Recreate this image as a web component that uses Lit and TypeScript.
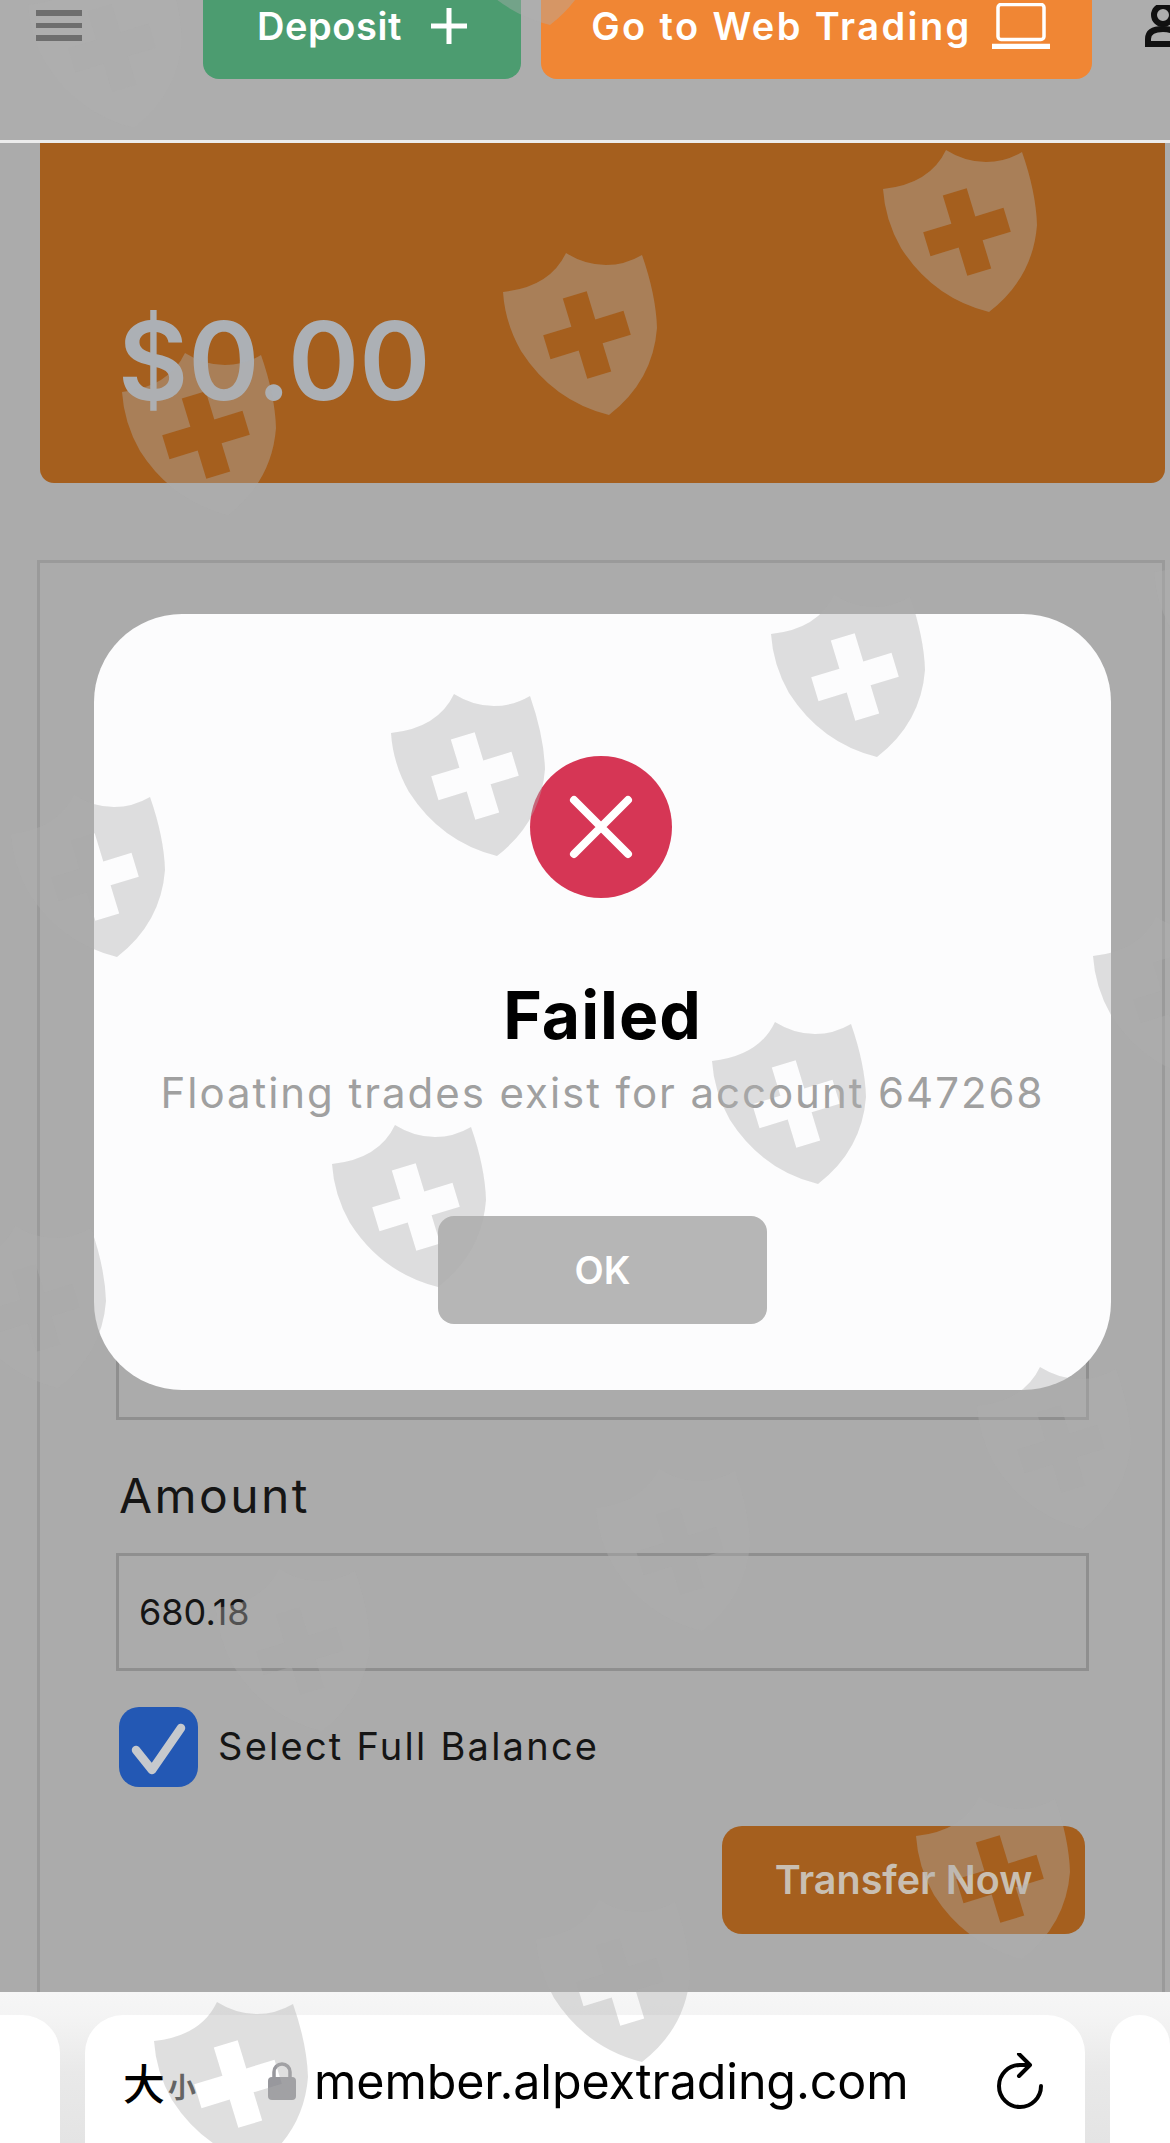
import { css, html, svg, LitElement } from "lit";
import { customElement } from "lit/decorators.js";

// watermark shields, top-left corner of each in page pixels
const SHIELDS: [number, number][] = [
  [28, -34], [444, -137],
  [883, 150], [503, 253], [122, 353],
  [771, 595], [391, 694], [11, 795], [1154, 533],
  [1093, 917], [712, 1022], [332, 1125], [-48, 1226],
  [977, 1367], [596, 1469], [216, 1569],
  [916, 1797], [536, 1900], [154, 2002],
];

const SHIELD_PATH =
  "M63 0Q82 12 103 12Q122 12 139 2Q153 42 154 75Q150 128 106 162Q50 148 18 98Q2 70 0 39Q47 34 63 0Z" +
  "M59.8 45.5L83.7 38.2L92.3 66.4L120.5 57.8L127.8 81.7L99.6 90.3L108.2 118.5L84.3 125.8L75.7 97.6L47.5 106.2L40.2 82.3L68.4 73.7Z";

@customElement("app-root")
export class AppRoot extends LitElement {
  static override styles = css`
    :host {
      display: block;
      font-family: Inter, "Noto Sans CJK SC", sans-serif;
    }

    .page {
      position: relative;
      width: 1170px;
      height: 2143px;
      overflow: hidden;
      display: flex;
      flex-direction: column;
      background: #ababab;
    }

    /* top bar */
    .topbar {
      flex: none;
      height: 143px;
      box-sizing: border-box;
      border-bottom: 3px solid #ececec;
      background: #adadad;
      display: flex;
      align-items: flex-start;
    }
    .burger {
      flex: none;
      margin: 10px 0 0 36px;
      width: 46px;
      display: flex;
      flex-direction: column;
      gap: 7px;
    }
    .burger span {
      display: block;
      height: 5.5px;
      background: #444;
    }
    .action {
      flex: none;
      height: 79px;
      box-sizing: border-box;
      padding-bottom: 28px;
      border-radius: 0 0 16px 16px;
      display: flex;
      align-items: center;
      justify-content: center;
      color: #fff;
      font-size: 38px;
      font-weight: 600;
    }
    .deposit {
      width: 318px;
      margin-left: 121px;
      gap: 29px;
      background: #4c9c70;
      letter-spacing: 0.6px;
    }
    .web {
      width: 551px;
      margin-left: 20px;
      padding-left: 8px;
      gap: 20px;
      background: #f08634;
      letter-spacing: 2.4px;
    }
    .user {
      margin: 5px 0 0 53px;
      flex: none;
    }

    /* balance card */
    .balance {
      flex: none;
      width: 1125px;
      height: 340px;
      box-sizing: border-box;
      margin-left: 40px;
      padding: 156px 0 0 78px;
      background: #a55f1e;
      border-radius: 0 0 14px 14px;
      color: #acb0b5;
      font-size: 108px;
      font-weight: 600;
      line-height: 124px;
    }

    /* transfer form */
    .panel {
      flex: 1;
      width: 1128px;
      box-sizing: border-box;
      margin: 77px 0 0 37px;
      padding: 737px 73px 0 76px;
      border: solid #9a9a9a;
      border-width: 3px 3px 0 3px;
    }
    .field {
      height: 120px;
      box-sizing: border-box;
      border: 3px solid #8f8f8f;
    }
    .label {
      margin: 48px 0 0 3px;
      font-size: 48px;
      line-height: 56px;
      letter-spacing: 2.4px;
      color: #151515;
    }
    .amount {
      height: 118px;
      margin-top: 29px;
      padding-left: 20px;
      display: flex;
      align-items: center;
      font-size: 36px;
      color: #151515;
    }
    .full {
      margin: 36px 0 0 3px;
      display: flex;
      align-items: center;
      gap: 20px;
      font-size: 38px;
      letter-spacing: 2.25px;
      color: #151515;
    }
    .full span {
      margin-top: -3px;
    }
    .check {
      width: 79px;
      height: 80px;
      border-radius: 20px;
      background: #2358b4;
      display: block;
    }
    .transfer {
      width: 363px;
      height: 108px;
      margin: 39px 0 0 606px;
      border-radius: 20px;
      background: #a55f1e;
      color: #c9bfb2;
      font-size: 39.5px;
      font-weight: 600;
      display: flex;
      align-items: center;
      justify-content: center;
    }

    /* browser address bar */
    .browser {
      flex: none;
      height: 151px;
      box-sizing: border-box;
      padding-top: 23px;
      display: flex;
      gap: 25px;
      background: linear-gradient(#f6f6f6 0, #f4f4f4 23px, #e9e9e9 80px, #e4e4e4 100%);
    }
    .tab {
      flex: none;
      background: #fff;
      border-radius: 38px 38px 0 0;
    }
    .tab.side-l {
      width: 60px;
      border-radius: 0 38px 0 0;
    }
    .tab.side-r {
      width: 60px;
    }
    .tab.main {
      width: 1000px;
      box-sizing: border-box;
      padding-top: 4px;
      display: flex;
      align-items: center;
      color: #000;
    }
    .zh-big {
      margin-left: 38px;
      font-size: 42px;
      font-weight: 500;
    }
    .zh-small {
      margin-left: 3px;
      margin-top: 10px;
      font-size: 28px;
      font-weight: 600;
      color: #333;
    }
    .lock {
      margin-left: 72px;
      display: block;
    }
    .url {
      margin-left: 18px;
      font-size: 48.4px;
      letter-spacing: -0.1px;
    }
    .reload {
      margin-left: 88px;
      display: block;
    }

    /* failure dialog */
    .modal {
      position: absolute;
      left: 94px;
      top: 614px;
      width: 1017px;
      height: 776px;
      box-sizing: border-box;
      padding-top: 142px;
      border-radius: 88px;
      background: #fcfcfd;
      display: flex;
      flex-direction: column;
      align-items: center;
    }
    .cross {
      width: 142px;
      height: 142px;
      margin-left: -3px;
      border-radius: 50%;
      background: #d63655;
      display: block;
    }
    .title {
      margin-top: 78px;
      font-size: 66px;
      line-height: 78px;
      font-weight: 700;
      letter-spacing: 1px;
      color: #000;
    }
    .message {
      margin-top: 13px;
      font-size: 42px;
      line-height: 52px;
      letter-spacing: 1.95px;
      color: #a0a0a0;
      white-space: nowrap;
    }
    .ok {
      width: 329px;
      height: 108px;
      margin-top: 97px;
      border-radius: 16px;
      background: #b6b6b6;
      color: #fff;
      font-size: 38px;
      font-weight: 600;
      display: flex;
      align-items: center;
      justify-content: center;
    }

    /* watermark layer sits over everything */
    .marks {
      position: absolute;
      inset: 0;
      pointer-events: none;
    }
    .marks svg {
      position: absolute;
      overflow: visible;
    }
  `;

  private shield([x, y]: [number, number]) {
    return html`<svg
      width="155"
      height="165"
      viewBox="0 0 155 165"
      style="left:${x}px;top:${y}px"
    >
      ${svg`<path d=${SHIELD_PATH} fill="rgb(176,176,176)" fill-opacity="0.4" fill-rule="evenodd" />`}
    </svg>`;
  }

  override render() {
    return html`
      <div class="page">
        <header class="topbar">
          <div class="burger"><span></span><span></span><span></span></div>
          <div class="action deposit">
            Deposit
            <svg width="36" height="36" viewBox="0 0 36 36">
              <path d="M18 0V36M0 18H36" stroke="#fff" stroke-width="5" />
            </svg>
          </div>
          <div class="action web">
            Go to Web Trading
            <svg width="58" height="46" viewBox="0 0 58 46" fill="none" stroke="#fff">
              <rect x="6" y="1.5" width="46" height="35" rx="3" stroke-width="3.5" />
              <path d="M0 43.5H58" stroke-width="5.5" />
            </svg>
          </div>
          <svg class="user" width="50" height="42" viewBox="0 0 50 42" fill="none" stroke="#111" stroke-width="6">
            <circle cx="18" cy="10" r="9" />
            <path d="M3 39V34C3 27 9 24 18 24S33 27 33 34V39H3Z" />
          </svg>
        </header>

        <section class="balance">$0.00</section>

        <section class="panel">
          <div class="field"></div>
          <div class="label">Amount</div>
          <div class="field amount">680.18</div>
          <div class="full">
            <svg class="check" viewBox="0 0 79 80" fill="none">
              <path
                d="M17 43L33 63L62 21"
                stroke="#c6c9cd"
                stroke-width="8.5"
                stroke-linecap="round"
                stroke-linejoin="round"
              />
            </svg>
            <span>Select Full Balance</span>
          </div>
          <div class="transfer">Transfer Now</div>
        </section>

        <footer class="browser">
          <div class="tab side-l"></div>
          <div class="tab main">
            <span class="zh-big">大</span><span class="zh-small">小</span>
            <svg class="lock" width="28" height="38" viewBox="0 0 28 38">
              <path d="M6 17V10A8 8 0 0 1 22 10V17" fill="none" stroke="#98989d" stroke-width="3.5" />
              <rect x="0" y="15" width="28" height="23" rx="4" fill="#98989d" />
            </svg>
            <span class="url">member.alpextrading.com</span>
            <svg class="reload" width="46" height="56" viewBox="0 0 46 56" fill="none" stroke="#000" stroke-width="4" stroke-linecap="round" stroke-linejoin="round">
              <path d="M44 33A21 21 0 1 1 23 12H31" />
              <path d="M22 1L33 12L22 23" />
            </svg>
          </div>
          <div class="tab side-r"></div>
        </footer>

        <div class="modal">
          <svg class="cross" viewBox="0 0 142 142">
            <path d="M44 44L98 98M98 44L44 98" stroke="#fff" stroke-width="8" stroke-linecap="round" />
          </svg>
          <div class="title">Failed</div>
          <div class="message">Floating trades exist for account 647268</div>
          <div class="ok">OK</div>
        </div>

        <div class="marks">${SHIELDS.map((s) => this.shield(s))}</div>
      </div>
    `;
  }
}
